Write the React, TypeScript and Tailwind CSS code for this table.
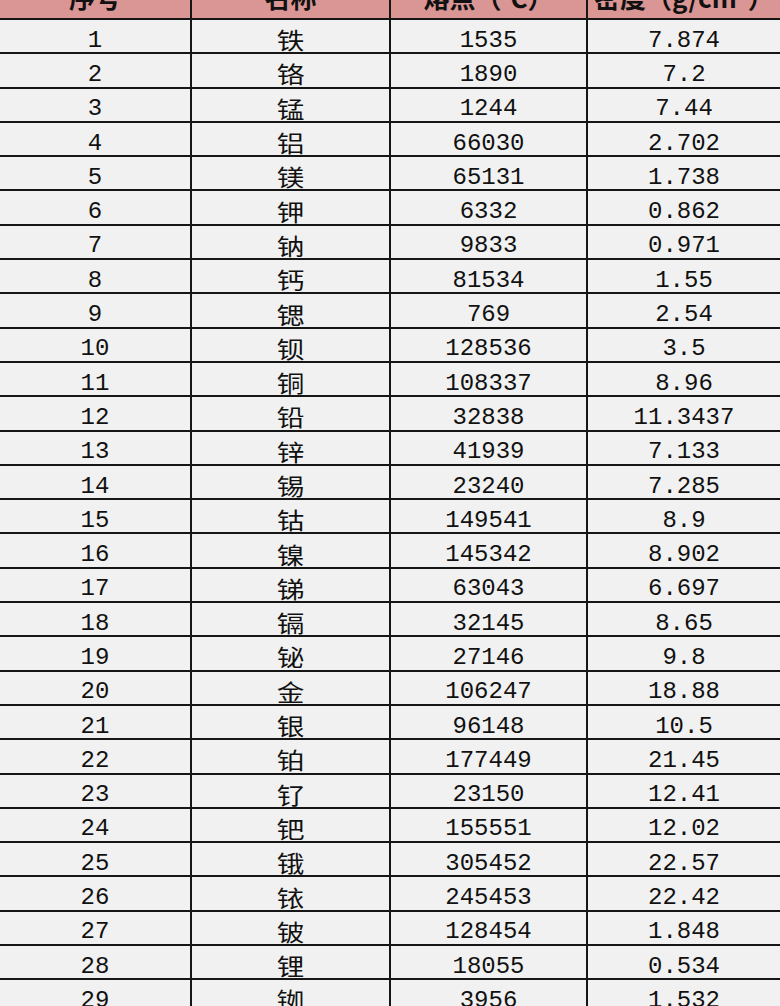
import React from 'react';

const rows: [number, string, string, string][] = [
  [1, '铁', '1535', '7.874'],
  [2, '铬', '1890', '7.2'],
  [3, '锰', '1244', '7.44'],
  [4, '铝', '66030', '2.702'],
  [5, '镁', '65131', '1.738'],
  [6, '钾', '6332', '0.862'],
  [7, '钠', '9833', '0.971'],
  [8, '钙', '81534', '1.55'],
  [9, '锶', '769', '2.54'],
  [10, '钡', '128536', '3.5'],
  [11, '铜', '108337', '8.96'],
  [12, '铅', '32838', '11.3437'],
  [13, '锌', '41939', '7.133'],
  [14, '锡', '23240', '7.285'],
  [15, '钴', '149541', '8.9'],
  [16, '镍', '145342', '8.902'],
  [17, '锑', '63043', '6.697'],
  [18, '镉', '32145', '8.65'],
  [19, '铋', '27146', '9.8'],
  [20, '金', '106247', '18.88'],
  [21, '银', '96148', '10.5'],
  [22, '铂', '177449', '21.45'],
  [23, '钌', '23150', '12.41'],
  [24, '钯', '155551', '12.02'],
  [25, '锇', '305452', '22.57'],
  [26, '铱', '245453', '22.42'],
  [27, '铍', '128454', '1.848'],
  [28, '锂', '18055', '0.534'],
  [29, '铷', '3956', '1.532'],
];

const num = "font-['Liberation_Mono',monospace] text-[24px] pt-[9px]";
const cjk = "font-['Noto_Sans_CJK_SC',sans-serif] text-[23px] pt-[7px]";

export default function App() {
  return (
    <div className="w-[780px] h-screen overflow-hidden bg-[#f1f1f1] text-[#111]">
      {/* header, top part is cut off */}
      <div className="-mt-[25px] h-[45px] flex border-b-2 border-[#161616] bg-[#da9694] font-['Noto_Sans_CJK_SC',sans-serif] text-[26px] font-bold">
        <div className="w-[192px] border-r-2 border-[#161616] flex items-center justify-center">序号</div>
        <div className="w-[199px] border-r-2 border-[#161616] flex items-center justify-center">名称</div>
        <div className="w-[197px] border-r-2 border-[#161616] flex items-center justify-center">熔点（℃）</div>
        <div className="flex-1 flex items-center justify-center whitespace-nowrap">密度（g/cm³）</div>
      </div>

      {rows.map(([n, name, melt, dens]) => (
        <div key={n} className="h-[34.3px] flex border-b-2 border-[#161616] leading-none">
          <div className={`w-[192px] border-r-2 border-[#161616] flex items-center justify-center ${num}`}>{n}</div>
          <div className={`w-[199px] border-r-2 border-[#161616] flex items-center justify-center ${cjk}`}>
            <span className="inline-block scale-x-[1.2]">{name}</span>
          </div>
          <div className={`w-[197px] border-r-2 border-[#161616] flex items-center justify-center ${num}`}>{melt}</div>
          <div className={`flex-1 flex items-center justify-center ${num}`}>{dens}</div>
        </div>
      ))}
    </div>
  );
}
